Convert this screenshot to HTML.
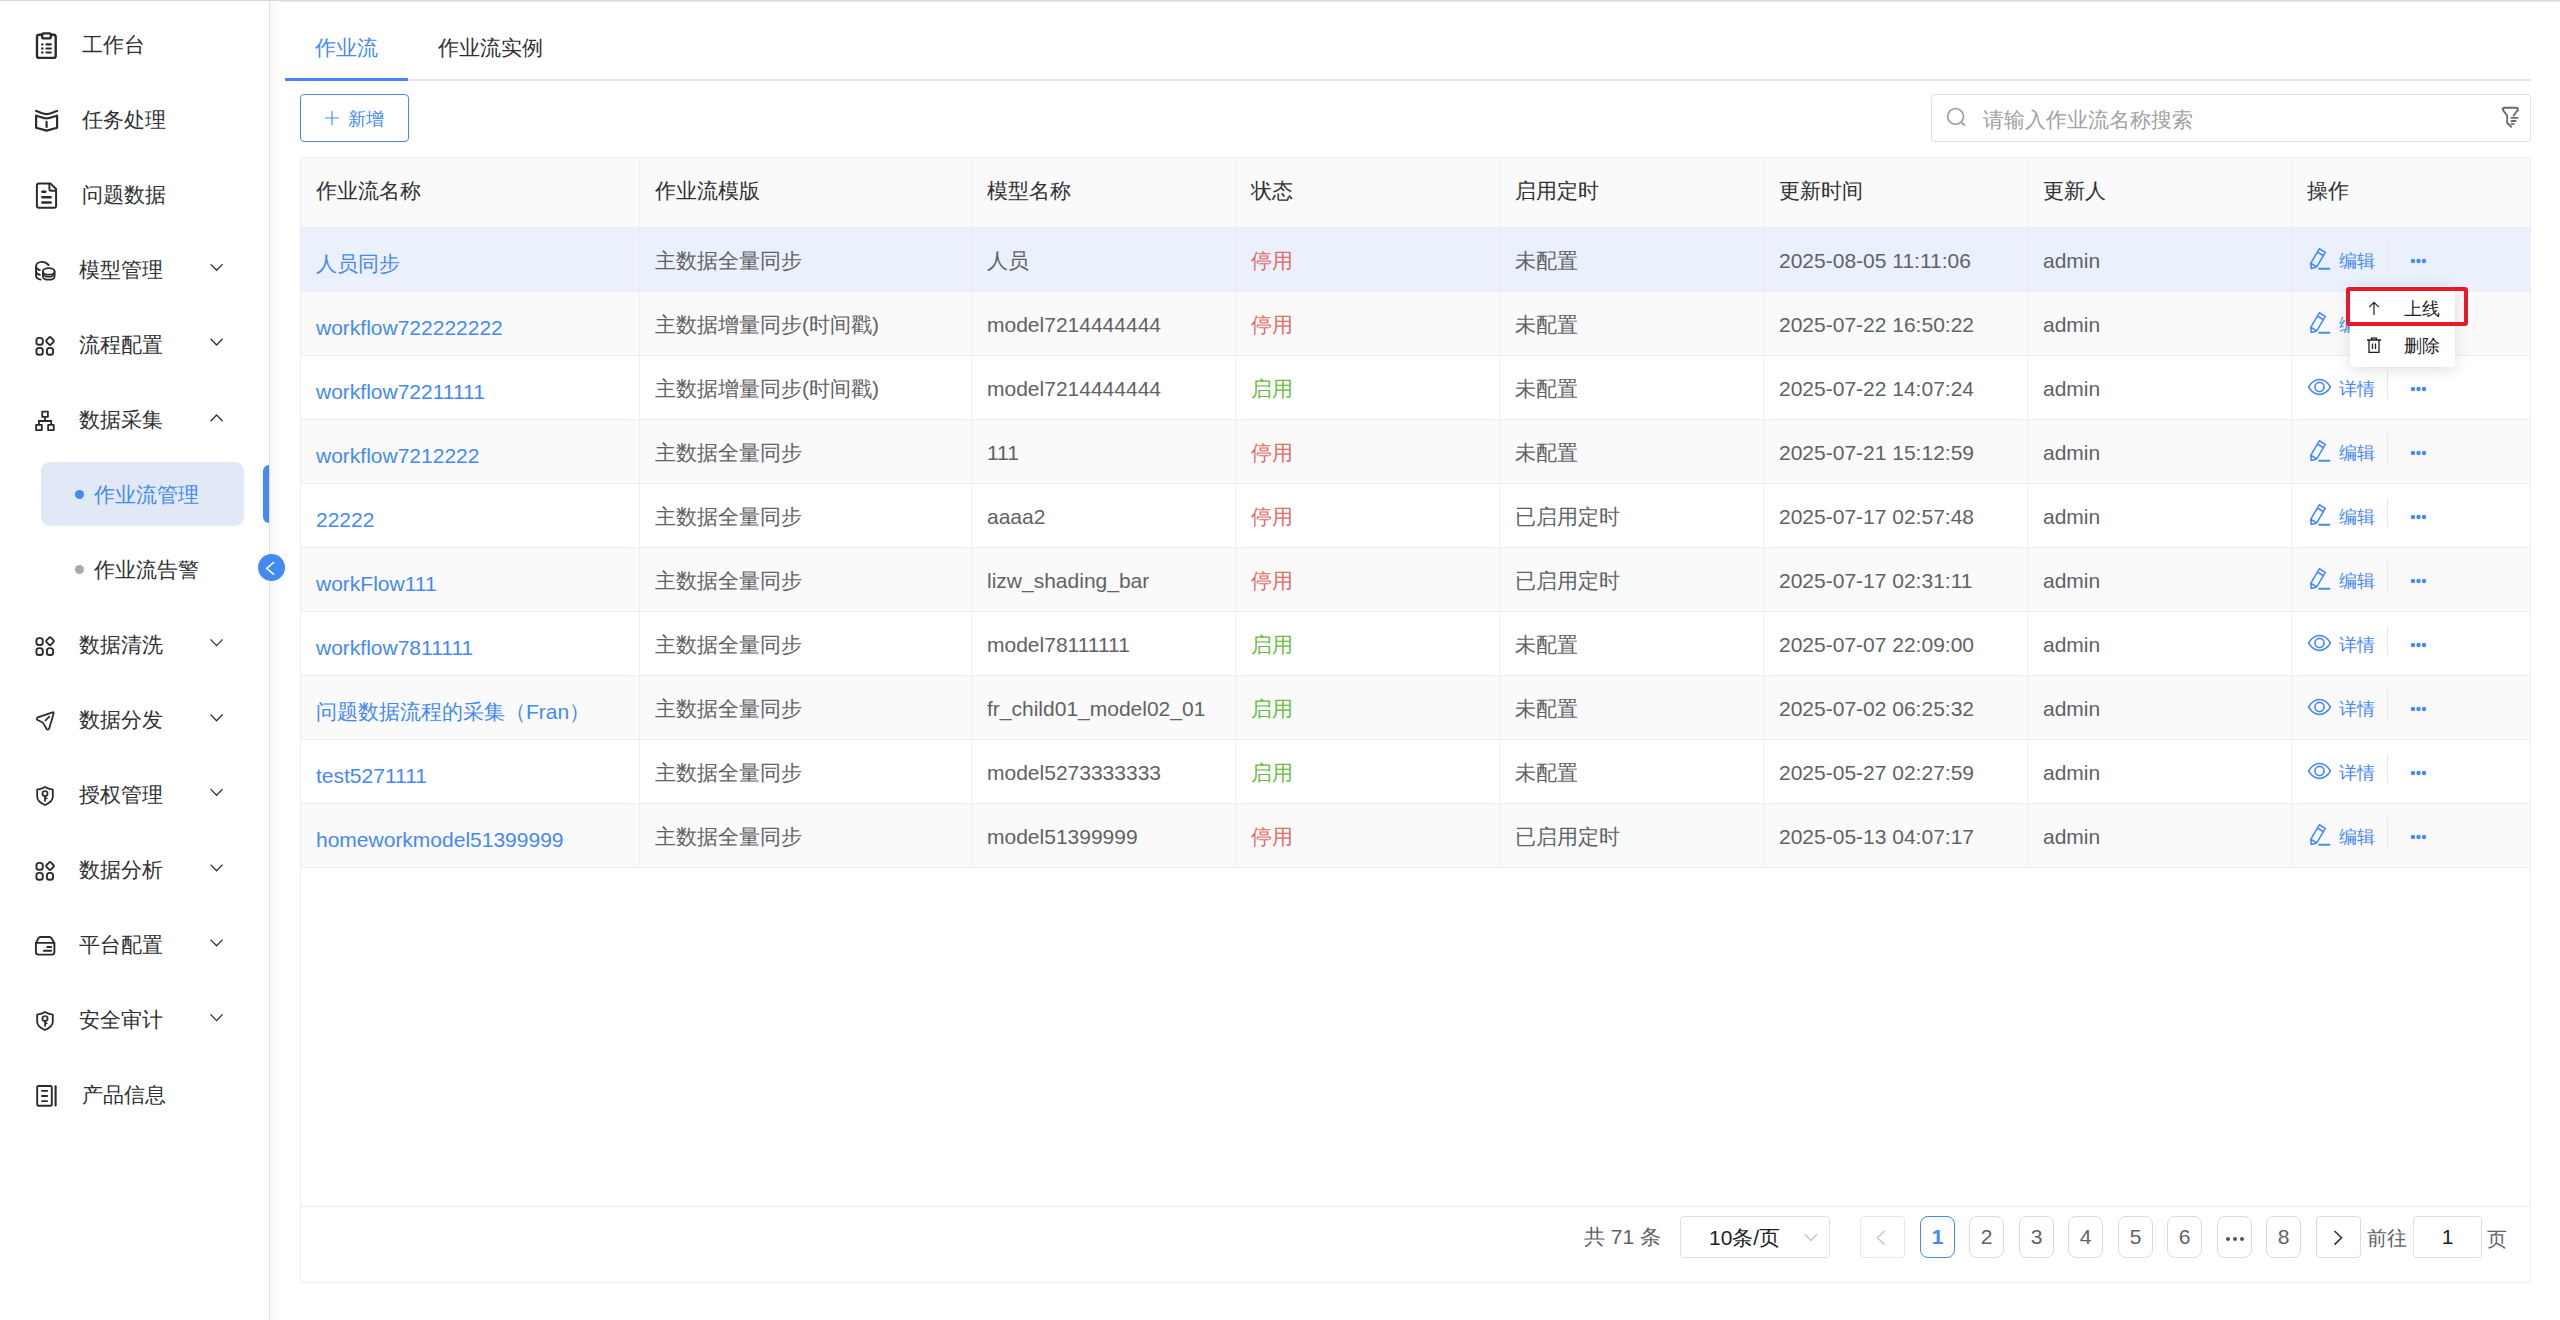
<!DOCTYPE html>
<html><head><meta charset="utf-8">
<style>
*{box-sizing:border-box;margin:0;padding:0}
html,body{width:2560px;height:1320px;overflow:hidden;background:#fff;font-family:"Liberation Sans",sans-serif;color:#303133}
.a{position:absolute;white-space:nowrap}
.mi{position:absolute;font-size:21px;line-height:40px;height:40px;color:#303133;white-space:nowrap}
.th{position:absolute;font-size:21px;color:#303133;white-space:nowrap;line-height:30px}
.td{position:absolute;font-size:21px;color:#606266;white-space:nowrap;line-height:30px}
.vl{position:absolute;width:1px;background:#ebeef5}
.hl{position:absolute;height:1px;background:#ebeef5}
.pg{position:absolute;top:1216px;height:42px;width:35px;border:1px solid #dcdcdc;border-radius:8px;font-size:21px;line-height:40px;text-align:center;color:#606266;background:#fff}
</style></head>
<body>

<div class="a" style="left:0;top:0;width:2560px;height:1px;background:#d8d8d8"></div>
<div class="a" style="left:270px;top:1px;width:2290px;height:2px;background:linear-gradient(180deg,#e9ebf2,#ffffff)"></div>
<div class="a" style="left:269px;top:1px;width:1px;height:1319px;background:#e0e0e0"></div>
<div class="a" style="left:270px;top:1px;width:11px;height:1319px;background:linear-gradient(90deg,#f6f6f6,#ffffff)"></div>
<svg class="a" style="left:0;top:0" width="269" height="1320" viewBox="0 0 269 1320"><rect x="37" y="34.7" width="18.7" height="23.2" rx="2.2" fill="none" stroke="#2b2b2b" stroke-linecap="round" stroke-linejoin="round" stroke-width="2.4"/><rect x="42.1" y="33.4" width="8.8" height="5" rx="1.6" fill="#fff" stroke="#2b2b2b" stroke-width="2.4"/><circle cx="42.3" cy="44.4" r="1.2" fill="#2b2b2b"/><rect x="45.3" y="43.3" width="6.6" height="2.2" rx="1.1" fill="#2b2b2b"/><circle cx="42.3" cy="48.5" r="1.2" fill="#2b2b2b"/><rect x="45.3" y="47.4" width="6.6" height="2.2" rx="1.1" fill="#2b2b2b"/><circle cx="42.3" cy="52.5" r="1.2" fill="#2b2b2b"/><rect x="45.3" y="51.4" width="6.6" height="2.2" rx="1.1" fill="#2b2b2b"/><path d="M36.1 111 C40.5 112.4 43.5 114.2 46.6 114.2 C49.7 114.2 52.7 112.4 57.1 111" fill="none" stroke="#2b2b2b" stroke-linecap="round" stroke-linejoin="round" stroke-width="2.2"/><path d="M36.1 115.6 C40.5 117 43.5 118.3 46.6 118.3 C49.7 118.3 52.7 117 57.1 115.6 V127.8 L46.6 130.6 L36.1 127.8 Z" fill="none" stroke="#2b2b2b" stroke-linecap="round" stroke-linejoin="round" stroke-width="2.2"/><path d="M46.6 121.8 V127" fill="none" stroke="#2b2b2b" stroke-linecap="round" stroke-linejoin="round" stroke-width="2.2"/><path d="M38.9 183.6 H50.7 L56.1 189 V205.7 Q56.1 207.7 54.1 207.7 H38.9 Q36.9 207.7 36.9 205.7 V185.6 Q36.9 183.6 38.9 183.6 Z" fill="none" stroke="#2b2b2b" stroke-linecap="round" stroke-linejoin="round" stroke-width="2"/><path d="M49.4 184 V189 Q49.4 190.7 51.1 190.7 H55.8" fill="none" stroke="#2b2b2b" stroke-linecap="round" stroke-linejoin="round" stroke-width="2"/><path d="M42.3 191.7 H45.4 M42.3 197.2 H50.7 M42.3 202.5 H50.7" fill="none" stroke="#2b2b2b" stroke-linecap="round" stroke-linejoin="round" stroke-width="2.4"/><path d="M48.6 265 C46.5 262.6 44.3 261.9 42 261.9 C38.5 261.9 36 263.9 36 266.5 V275.5 C36 277.5 38 279 40.7 279.6" fill="none" stroke="#2b2b2b" stroke-linecap="round" stroke-linejoin="round" stroke-width="1.9"/><path d="M36 267 C36.5 268.8 38 269.6 39.8 270 M36 271.8 C36.5 273.6 38 274.4 39.8 274.8" fill="none" stroke="#2b2b2b" stroke-linecap="round" stroke-linejoin="round" stroke-width="1.9"/><ellipse cx="48.75" cy="271.4" rx="5.85" ry="3.3" fill="none" stroke="#2b2b2b" stroke-linecap="round" stroke-linejoin="round" stroke-width="1.7"/><path d="M42.9 271.4 V276.4 C42.9 278.4 45.5 279.7 48.75 279.7 C52 279.7 54.6 278.4 54.6 276.4 V271.4" fill="none" stroke="#2b2b2b" stroke-linecap="round" stroke-linejoin="round" stroke-width="1.7"/><path d="M42.9 273 C43.4 275.6 45.8 276.8 48.75 276.8 C51.7 276.8 54.1 275.6 54.6 273" fill="none" stroke="#2b2b2b" stroke-linecap="round" stroke-linejoin="round" stroke-width="1.5"/><rect x="36.4" y="337.9" width="6.4" height="6.9" rx="2.6" fill="none" stroke="#2b2b2b" stroke-linecap="round" stroke-linejoin="round" stroke-width="1.9"/><path d="M49 337.6 Q50 336.6 51 337.6 L53.4 340.0 Q54.4 341.0 53.4 342.0 L51 344.4 Q50 345.4 49 344.4 L46.6 342.0 Q45.6 341.0 46.6 340.0 Z" fill="none" stroke="#2b2b2b" stroke-linecap="round" stroke-linejoin="round" stroke-width="1.9"/><rect x="36.4" y="347.9" width="6.4" height="6.9" rx="2.6" fill="none" stroke="#2b2b2b" stroke-linecap="round" stroke-linejoin="round" stroke-width="1.9"/><rect x="46.9" y="347.9" width="6.2" height="6.9" rx="2.6" fill="none" stroke="#2b2b2b" stroke-linecap="round" stroke-linejoin="round" stroke-width="1.9"/><rect x="42.2" y="411.6" width="5.7" height="5.2" fill="none" stroke="#2b2b2b" stroke-linecap="round" stroke-linejoin="round" stroke-width="1.8" stroke-linecap="butt" stroke-linejoin="miter"/><path d="M45 417 V421 M38.9 424.5 V421 H51.2 V424.5" fill="none" stroke="#2b2b2b" stroke-width="1.8"/><rect x="36.1" y="424.9" width="5.7" height="5.2" fill="none" stroke="#2b2b2b" stroke-linecap="round" stroke-linejoin="round" stroke-width="1.8" stroke-linecap="butt" stroke-linejoin="miter"/><rect x="48.1" y="424.9" width="5.7" height="5.2" fill="none" stroke="#2b2b2b" stroke-linecap="round" stroke-linejoin="round" stroke-width="1.8" stroke-linecap="butt" stroke-linejoin="miter"/><rect x="36.4" y="638.1" width="6.4" height="6.9" rx="2.6" fill="none" stroke="#2b2b2b" stroke-linecap="round" stroke-linejoin="round" stroke-width="1.9"/><path d="M49 637.8000000000001 Q50 636.8000000000001 51 637.8000000000001 L53.4 640.2 Q54.4 641.2 53.4 642.2 L51 644.6 Q50 645.6 49 644.6 L46.6 642.2 Q45.6 641.2 46.6 640.2 Z" fill="none" stroke="#2b2b2b" stroke-linecap="round" stroke-linejoin="round" stroke-width="1.9"/><rect x="36.4" y="648.1" width="6.4" height="6.9" rx="2.6" fill="none" stroke="#2b2b2b" stroke-linecap="round" stroke-linejoin="round" stroke-width="1.9"/><rect x="46.9" y="648.1" width="6.2" height="6.9" rx="2.6" fill="none" stroke="#2b2b2b" stroke-linecap="round" stroke-linejoin="round" stroke-width="1.9"/><path d="M52.6 712.3 L37.6 717.4 Q35.9 718.6 37.6 720 L41.8 722 Q43.3 722.8 44 724.3 L46.6 729 Q48 730.4 49.2 728.6 L53.5 714 Q54 711.9 52.6 712.3 Z" fill="none" stroke="#2b2b2b" stroke-linecap="round" stroke-linejoin="round" stroke-width="1.75"/><path d="M49.3 716.6 L45.4 720.5" fill="none" stroke="#2b2b2b" stroke-linecap="round" stroke-linejoin="round" stroke-width="1.75"/><path d="M45 787.0 Q42 789.0 37.2 789.6 V797.0 Q37.2 801.5 45 805.0 Q52.8 801.5 52.8 797.0 V789.6 Q48 789.0 45 787.0 Z" fill="none" stroke="#2b2b2b" stroke-linecap="round" stroke-linejoin="round" stroke-width="1.8"/><circle cx="45" cy="793.6" r="2.6" fill="none" stroke="#2b2b2b" stroke-linecap="round" stroke-linejoin="round" stroke-width="1.7"/><path d="M45 796.3 V801.0 M45 799.0 L46.8 798.3" fill="none" stroke="#2b2b2b" stroke-linecap="round" stroke-linejoin="round" stroke-width="1.7"/><rect x="36.4" y="862.9" width="6.4" height="6.9" rx="2.6" fill="none" stroke="#2b2b2b" stroke-linecap="round" stroke-linejoin="round" stroke-width="1.9"/><path d="M49 862.6 Q50 861.6 51 862.6 L53.4 865.0 Q54.4 866.0 53.4 867.0 L51 869.4 Q50 870.4 49 869.4 L46.6 867.0 Q45.6 866.0 46.6 865.0 Z" fill="none" stroke="#2b2b2b" stroke-linecap="round" stroke-linejoin="round" stroke-width="1.9"/><rect x="36.4" y="872.9" width="6.4" height="6.9" rx="2.6" fill="none" stroke="#2b2b2b" stroke-linecap="round" stroke-linejoin="round" stroke-width="1.9"/><rect x="46.9" y="872.9" width="6.2" height="6.9" rx="2.6" fill="none" stroke="#2b2b2b" stroke-linecap="round" stroke-linejoin="round" stroke-width="1.9"/><path d="M36 942.9 L38.4 938.3 Q39 937 40.5 937 H49.4 Q50.9 937 51.5 938.3 L54.3 942.9" fill="none" stroke="#2b2b2b" stroke-linecap="round" stroke-linejoin="round" stroke-width="1.9"/><path d="M35.9 942.9 H54.4 V952 Q54.4 954.6 51.8 954.6 H38.5 Q35.9 954.6 35.9 952 Z" fill="none" stroke="#2b2b2b" stroke-linecap="round" stroke-linejoin="round" stroke-width="1.9"/><path d="M47.3 947 H51.2 M43.8 950.8 H51.2" fill="none" stroke="#2b2b2b" stroke-linecap="round" stroke-linejoin="round" stroke-width="1.9"/><path d="M45 1012.0 Q42 1014.0 37.2 1014.6 V1022.0 Q37.2 1026.5 45 1030.0 Q52.8 1026.5 52.8 1022.0 V1014.6 Q48 1014.0 45 1012.0 Z" fill="none" stroke="#2b2b2b" stroke-linecap="round" stroke-linejoin="round" stroke-width="1.8"/><circle cx="45" cy="1018.6" r="2.6" fill="none" stroke="#2b2b2b" stroke-linecap="round" stroke-linejoin="round" stroke-width="1.7"/><path d="M45 1021.3 V1026.0 M45 1024.0 L46.8 1023.3" fill="none" stroke="#2b2b2b" stroke-linecap="round" stroke-linejoin="round" stroke-width="1.7"/><rect x="37.2" y="1086" width="14.6" height="19.7" rx="1.3" fill="none" stroke="#2b2b2b" stroke-linecap="round" stroke-linejoin="round" stroke-width="1.9"/><path d="M42 1090.9 H47.3 M42 1096 H47.3 M42 1101.1 H47.3" fill="none" stroke="#2b2b2b" stroke-linecap="round" stroke-linejoin="round" stroke-width="1.9"/><path d="M55.6 1086.2 V1104 L55.6 1105.5" fill="none" stroke="#2b2b2b" stroke-linecap="round" stroke-linejoin="round" stroke-width="2.1"/><path d="M210.6 264.1 L216.6 270.3 L222.6 264.1" fill="none" stroke="#333" stroke-width="1.3"/><path d="M210.6 338.8 L216.6 345.0 L222.6 338.8" fill="none" stroke="#333" stroke-width="1.3"/><path d="M210.6 421.2 L216.6 415.0 L222.6 421.2" fill="none" stroke="#333" stroke-width="1.3"/><path d="M210.6 639.3999999999999 L216.6 645.5999999999999 L222.6 639.3999999999999" fill="none" stroke="#333" stroke-width="1.3"/><path d="M210.6 714.4999999999999 L216.6 720.6999999999999 L222.6 714.4999999999999" fill="none" stroke="#333" stroke-width="1.3"/><path d="M210.6 789.0999999999999 L216.6 795.3 L222.6 789.0999999999999" fill="none" stroke="#333" stroke-width="1.3"/><path d="M210.6 864.5999999999999 L216.6 870.8 L222.6 864.5999999999999" fill="none" stroke="#333" stroke-width="1.3"/><path d="M210.6 939.5999999999999 L216.6 945.8 L222.6 939.5999999999999" fill="none" stroke="#333" stroke-width="1.3"/><path d="M210.6 1014.3999999999999 L216.6 1020.5999999999999 L222.6 1014.3999999999999" fill="none" stroke="#333" stroke-width="1.3"/></svg>
<div class="mi" style="left:82px;top:24.5px">工作台</div>
<div class="mi" style="left:82px;top:99.5px">任务处理</div>
<div class="mi" style="left:82px;top:174.5px">问题数据</div>
<div class="mi" style="left:79px;top:249.5px">模型管理</div>
<div class="mi" style="left:79px;top:324.5px">流程配置</div>
<div class="mi" style="left:79px;top:399.5px">数据采集</div>
<div class="mi" style="left:79px;top:624.5px">数据清洗</div>
<div class="mi" style="left:79px;top:699.5px">数据分发</div>
<div class="mi" style="left:79px;top:774.5px">授权管理</div>
<div class="mi" style="left:79px;top:849.5px">数据分析</div>
<div class="mi" style="left:79px;top:924.5px">平台配置</div>
<div class="mi" style="left:79px;top:999.5px">安全审计</div>
<div class="mi" style="left:82px;top:1074.5px">产品信息</div>
<div class="a" style="left:41px;top:462px;width:203px;height:64px;background:#e0e9f5;border-radius:9px"></div>
<div class="a" style="left:75px;top:490px;width:9px;height:9px;border-radius:50%;background:#4589f5"></div>
<div class="mi" style="left:94px;top:474.5px;color:#4589f5">作业流管理</div>
<div class="a" style="left:75px;top:565px;width:9px;height:9px;border-radius:50%;background:#aaaaaa"></div>
<div class="mi" style="left:94px;top:549.5px">作业流告警</div>
<div class="a" style="left:263px;top:465px;width:6px;height:58px;background:#4589f5;border-radius:6px 0 0 6px"></div>
<svg class="a" style="left:258px;top:554px" width="27" height="27" viewBox="0 0 27 27"><circle cx="13.5" cy="13.5" r="13.5" fill="#4589f5"/><path d="M16.1 8 L8.7 14.3 L16.1 20.7" fill="none" stroke="#fff" stroke-width="1.6"/></svg>
<div class="a" style="left:285px;top:79px;width:2246px;height:2px;background:#e4e7ed"></div>
<div class="a" style="left:285px;top:78px;width:123px;height:3px;background:#4589f5"></div>
<div class="a" style="left:315px;top:33px;font-size:21px;line-height:30px;color:#4589f5">作业流</div>
<div class="a" style="left:438px;top:33px;font-size:21px;line-height:30px;color:#303133">作业流实例</div>
<div class="a" style="left:300px;top:94px;width:109px;height:48px;border:1px solid #4589f5;border-radius:4px"></div>
<svg class="a" style="left:324px;top:110px" width="16" height="16" viewBox="0 0 16 16"><path d="M1 8 H15 M8 1 V15" stroke="#4589f5" stroke-width="1.15"/></svg>
<div class="a" style="left:348px;top:104px;font-size:18px;line-height:30px;color:#4589f5">新增</div>
<div class="a" style="left:1931px;top:94px;width:600px;height:48px;border:1px solid #dcdfe6;border-radius:4px;background:#fff"></div>
<svg class="a" style="left:1945px;top:106px" width="22" height="22" viewBox="0 0 22 22"><circle cx="10.6" cy="10.4" r="7.9" fill="none" stroke="#9a9a9a" stroke-width="1.6"/><path d="M16.3 16.3 L19.6 19.2" stroke="#9a9a9a" stroke-width="1.6" stroke-linecap="round"/></svg>
<div class="a" style="left:1983px;top:105px;font-size:21px;line-height:30px;color:#a2a2a2">请输入作业流名称搜索</div>
<svg class="a" style="left:2494px;top:100px" width="32" height="32" viewBox="0 0 32 32"><path d="M17.2 26.7 L13.2 23 V15.8 L8.9 9.9 Q7.9 7.8 10.9 7.8 H21.8 Q24.8 7.8 23.8 9.9 L19.6 15.5" fill="none" stroke="#6a6a6a" stroke-width="1.9" stroke-linecap="round" stroke-linejoin="round"/><path d="M17.5 17.9 H23.5 M17.5 21 H21.6 M17.5 23.9 H19.8" stroke="#6a6a6a" stroke-width="1.9" stroke-linecap="round"/></svg>
<div class="a" style="left:300px;top:157px;width:2231px;height:1126px;border:1px solid #ebeef5"></div>
<div class="a" style="left:301px;top:158px;width:2229px;height:69px;background:#fafafa"></div>
<div class="th" style="left:316px;top:176px">作业流名称</div>
<div class="th" style="left:655px;top:176px">作业流模版</div>
<div class="th" style="left:987px;top:176px">模型名称</div>
<div class="th" style="left:1251px;top:176px">状态</div>
<div class="th" style="left:1515px;top:176px">启用定时</div>
<div class="th" style="left:1779px;top:176px">更新时间</div>
<div class="th" style="left:2043px;top:176px">更新人</div>
<div class="th" style="left:2307px;top:176px">操作</div>
<div class="a" style="left:301px;top:227px;width:2229px;height:64px;background:#ebf0fd"></div>
<div class="hl" style="left:301px;top:227px;width:2229px"></div>
<div class="td" style="left:316px;top:249px;color:#4589f5">人员同步</div>
<div class="td" style="left:655px;top:246px">主数据全量同步</div>
<div class="td" style="left:987px;top:246px">人员</div>
<div class="td" style="left:1251px;top:246px;color:#e26a66">停用</div>
<div class="td" style="left:1515px;top:246px">未配置</div>
<div class="td" style="left:1779px;top:246px">2025-08-05 11:11:06</div>
<div class="td" style="left:2043px;top:246px">admin</div>
<div class="a" style="left:2304px;top:242px;line-height:0"><svg width="32" height="32" viewBox="0 0 32 32"><path d="M15.3 6.8 L21.3 10.4 L12.7 24.9 L7.3 26.4 L6.7 21.3 Z M13.6 10.2 L19.6 13.8 M6.7 21.3 L12.7 24.9" fill="none" stroke="#4589f5" stroke-width="1.6" stroke-linejoin="round"/><path d="M15.2 26.8 H25.3" stroke="#4589f5" stroke-width="2" stroke-linecap="round"/></svg></div>
<div class="a" style="left:2339px;top:246px;font-size:18px;line-height:30px;color:#4589f5">编辑</div>
<div class="a" style="left:2387px;top:242px;width:1px;height:29px;background:#e4e7ed"></div>
<svg class="a" style="left:2408px;top:258px" width="20" height="6" viewBox="0 0 20 6"><circle cx="5" cy="3" r="2.2" fill="#4589f5"/><circle cx="10.5" cy="3" r="2.2" fill="#4589f5"/><circle cx="16" cy="3" r="2.2" fill="#4589f5"/></svg>
<div class="a" style="left:301px;top:291px;width:2229px;height:64px;background:#fafafa"></div>
<div class="hl" style="left:301px;top:291px;width:2229px"></div>
<div class="td" style="left:316px;top:313px;color:#4589f5">workflow722222222</div>
<div class="td" style="left:655px;top:310px">主数据增量同步(时间戳)</div>
<div class="td" style="left:987px;top:310px">model7214444444</div>
<div class="td" style="left:1251px;top:310px;color:#e26a66">停用</div>
<div class="td" style="left:1515px;top:310px">未配置</div>
<div class="td" style="left:1779px;top:310px">2025-07-22 16:50:22</div>
<div class="td" style="left:2043px;top:310px">admin</div>
<div class="a" style="left:2304px;top:306px;line-height:0"><svg width="32" height="32" viewBox="0 0 32 32"><path d="M15.3 6.8 L21.3 10.4 L12.7 24.9 L7.3 26.4 L6.7 21.3 Z M13.6 10.2 L19.6 13.8 M6.7 21.3 L12.7 24.9" fill="none" stroke="#4589f5" stroke-width="1.6" stroke-linejoin="round"/><path d="M15.2 26.8 H25.3" stroke="#4589f5" stroke-width="2" stroke-linecap="round"/></svg></div>
<div class="a" style="left:2339px;top:310px;font-size:18px;line-height:30px;color:#4589f5">编辑</div>
<div class="a" style="left:2387px;top:306px;width:1px;height:29px;background:#e4e7ed"></div>
<svg class="a" style="left:2408px;top:322px" width="20" height="6" viewBox="0 0 20 6"><circle cx="5" cy="3" r="2.2" fill="#4589f5"/><circle cx="10.5" cy="3" r="2.2" fill="#4589f5"/><circle cx="16" cy="3" r="2.2" fill="#4589f5"/></svg>
<div class="a" style="left:301px;top:355px;width:2229px;height:64px;background:#ffffff"></div>
<div class="hl" style="left:301px;top:355px;width:2229px"></div>
<div class="td" style="left:316px;top:377px;color:#4589f5">workflow72211111</div>
<div class="td" style="left:655px;top:374px">主数据增量同步(时间戳)</div>
<div class="td" style="left:987px;top:374px">model7214444444</div>
<div class="td" style="left:1251px;top:374px;color:#67bd45">启用</div>
<div class="td" style="left:1515px;top:374px">未配置</div>
<div class="td" style="left:1779px;top:374px">2025-07-22 14:07:24</div>
<div class="td" style="left:2043px;top:374px">admin</div>
<div class="a" style="left:2307px;top:378px;line-height:0"><svg width="26" height="20" viewBox="0 0 26 20"><path d="M1.5 9 C4.8 3.8 8.6 1.6 12.5 1.6 C16.4 1.6 20.2 3.8 23.5 9 C20.2 14.2 16.4 16.4 12.5 16.4 C8.6 16.4 4.8 14.2 1.5 9 Z" fill="none" stroke="#4589f5" stroke-width="1.5" stroke-linejoin="round"/><circle cx="12.5" cy="9" r="4.6" fill="none" stroke="#4589f5" stroke-width="1.6"/></svg></div>
<div class="a" style="left:2339px;top:374px;font-size:18px;line-height:30px;color:#4589f5">详情</div>
<div class="a" style="left:2387px;top:370px;width:1px;height:29px;background:#e4e7ed"></div>
<svg class="a" style="left:2408px;top:386px" width="20" height="6" viewBox="0 0 20 6"><circle cx="5" cy="3" r="2.2" fill="#4589f5"/><circle cx="10.5" cy="3" r="2.2" fill="#4589f5"/><circle cx="16" cy="3" r="2.2" fill="#4589f5"/></svg>
<div class="a" style="left:301px;top:419px;width:2229px;height:64px;background:#fafafa"></div>
<div class="hl" style="left:301px;top:419px;width:2229px"></div>
<div class="td" style="left:316px;top:441px;color:#4589f5">workflow7212222</div>
<div class="td" style="left:655px;top:438px">主数据全量同步</div>
<div class="td" style="left:987px;top:438px">111</div>
<div class="td" style="left:1251px;top:438px;color:#e26a66">停用</div>
<div class="td" style="left:1515px;top:438px">未配置</div>
<div class="td" style="left:1779px;top:438px">2025-07-21 15:12:59</div>
<div class="td" style="left:2043px;top:438px">admin</div>
<div class="a" style="left:2304px;top:434px;line-height:0"><svg width="32" height="32" viewBox="0 0 32 32"><path d="M15.3 6.8 L21.3 10.4 L12.7 24.9 L7.3 26.4 L6.7 21.3 Z M13.6 10.2 L19.6 13.8 M6.7 21.3 L12.7 24.9" fill="none" stroke="#4589f5" stroke-width="1.6" stroke-linejoin="round"/><path d="M15.2 26.8 H25.3" stroke="#4589f5" stroke-width="2" stroke-linecap="round"/></svg></div>
<div class="a" style="left:2339px;top:438px;font-size:18px;line-height:30px;color:#4589f5">编辑</div>
<div class="a" style="left:2387px;top:434px;width:1px;height:29px;background:#e4e7ed"></div>
<svg class="a" style="left:2408px;top:450px" width="20" height="6" viewBox="0 0 20 6"><circle cx="5" cy="3" r="2.2" fill="#4589f5"/><circle cx="10.5" cy="3" r="2.2" fill="#4589f5"/><circle cx="16" cy="3" r="2.2" fill="#4589f5"/></svg>
<div class="a" style="left:301px;top:483px;width:2229px;height:64px;background:#ffffff"></div>
<div class="hl" style="left:301px;top:483px;width:2229px"></div>
<div class="td" style="left:316px;top:505px;color:#4589f5">22222</div>
<div class="td" style="left:655px;top:502px">主数据全量同步</div>
<div class="td" style="left:987px;top:502px">aaaa2</div>
<div class="td" style="left:1251px;top:502px;color:#e26a66">停用</div>
<div class="td" style="left:1515px;top:502px">已启用定时</div>
<div class="td" style="left:1779px;top:502px">2025-07-17 02:57:48</div>
<div class="td" style="left:2043px;top:502px">admin</div>
<div class="a" style="left:2304px;top:498px;line-height:0"><svg width="32" height="32" viewBox="0 0 32 32"><path d="M15.3 6.8 L21.3 10.4 L12.7 24.9 L7.3 26.4 L6.7 21.3 Z M13.6 10.2 L19.6 13.8 M6.7 21.3 L12.7 24.9" fill="none" stroke="#4589f5" stroke-width="1.6" stroke-linejoin="round"/><path d="M15.2 26.8 H25.3" stroke="#4589f5" stroke-width="2" stroke-linecap="round"/></svg></div>
<div class="a" style="left:2339px;top:502px;font-size:18px;line-height:30px;color:#4589f5">编辑</div>
<div class="a" style="left:2387px;top:498px;width:1px;height:29px;background:#e4e7ed"></div>
<svg class="a" style="left:2408px;top:514px" width="20" height="6" viewBox="0 0 20 6"><circle cx="5" cy="3" r="2.2" fill="#4589f5"/><circle cx="10.5" cy="3" r="2.2" fill="#4589f5"/><circle cx="16" cy="3" r="2.2" fill="#4589f5"/></svg>
<div class="a" style="left:301px;top:547px;width:2229px;height:64px;background:#fafafa"></div>
<div class="hl" style="left:301px;top:547px;width:2229px"></div>
<div class="td" style="left:316px;top:569px;color:#4589f5">workFlow111</div>
<div class="td" style="left:655px;top:566px">主数据全量同步</div>
<div class="td" style="left:987px;top:566px">lizw_shading_bar</div>
<div class="td" style="left:1251px;top:566px;color:#e26a66">停用</div>
<div class="td" style="left:1515px;top:566px">已启用定时</div>
<div class="td" style="left:1779px;top:566px">2025-07-17 02:31:11</div>
<div class="td" style="left:2043px;top:566px">admin</div>
<div class="a" style="left:2304px;top:562px;line-height:0"><svg width="32" height="32" viewBox="0 0 32 32"><path d="M15.3 6.8 L21.3 10.4 L12.7 24.9 L7.3 26.4 L6.7 21.3 Z M13.6 10.2 L19.6 13.8 M6.7 21.3 L12.7 24.9" fill="none" stroke="#4589f5" stroke-width="1.6" stroke-linejoin="round"/><path d="M15.2 26.8 H25.3" stroke="#4589f5" stroke-width="2" stroke-linecap="round"/></svg></div>
<div class="a" style="left:2339px;top:566px;font-size:18px;line-height:30px;color:#4589f5">编辑</div>
<div class="a" style="left:2387px;top:562px;width:1px;height:29px;background:#e4e7ed"></div>
<svg class="a" style="left:2408px;top:578px" width="20" height="6" viewBox="0 0 20 6"><circle cx="5" cy="3" r="2.2" fill="#4589f5"/><circle cx="10.5" cy="3" r="2.2" fill="#4589f5"/><circle cx="16" cy="3" r="2.2" fill="#4589f5"/></svg>
<div class="a" style="left:301px;top:611px;width:2229px;height:64px;background:#ffffff"></div>
<div class="hl" style="left:301px;top:611px;width:2229px"></div>
<div class="td" style="left:316px;top:633px;color:#4589f5">workflow7811111</div>
<div class="td" style="left:655px;top:630px">主数据全量同步</div>
<div class="td" style="left:987px;top:630px">model78111111</div>
<div class="td" style="left:1251px;top:630px;color:#67bd45">启用</div>
<div class="td" style="left:1515px;top:630px">未配置</div>
<div class="td" style="left:1779px;top:630px">2025-07-07 22:09:00</div>
<div class="td" style="left:2043px;top:630px">admin</div>
<div class="a" style="left:2307px;top:634px;line-height:0"><svg width="26" height="20" viewBox="0 0 26 20"><path d="M1.5 9 C4.8 3.8 8.6 1.6 12.5 1.6 C16.4 1.6 20.2 3.8 23.5 9 C20.2 14.2 16.4 16.4 12.5 16.4 C8.6 16.4 4.8 14.2 1.5 9 Z" fill="none" stroke="#4589f5" stroke-width="1.5" stroke-linejoin="round"/><circle cx="12.5" cy="9" r="4.6" fill="none" stroke="#4589f5" stroke-width="1.6"/></svg></div>
<div class="a" style="left:2339px;top:630px;font-size:18px;line-height:30px;color:#4589f5">详情</div>
<div class="a" style="left:2387px;top:626px;width:1px;height:29px;background:#e4e7ed"></div>
<svg class="a" style="left:2408px;top:642px" width="20" height="6" viewBox="0 0 20 6"><circle cx="5" cy="3" r="2.2" fill="#4589f5"/><circle cx="10.5" cy="3" r="2.2" fill="#4589f5"/><circle cx="16" cy="3" r="2.2" fill="#4589f5"/></svg>
<div class="a" style="left:301px;top:675px;width:2229px;height:64px;background:#fafafa"></div>
<div class="hl" style="left:301px;top:675px;width:2229px"></div>
<div class="td" style="left:316px;top:697px;color:#4589f5">问题数据流程的采集（Fran）</div>
<div class="td" style="left:655px;top:694px">主数据全量同步</div>
<div class="td" style="left:987px;top:694px">fr_child01_model02_01</div>
<div class="td" style="left:1251px;top:694px;color:#67bd45">启用</div>
<div class="td" style="left:1515px;top:694px">未配置</div>
<div class="td" style="left:1779px;top:694px">2025-07-02 06:25:32</div>
<div class="td" style="left:2043px;top:694px">admin</div>
<div class="a" style="left:2307px;top:698px;line-height:0"><svg width="26" height="20" viewBox="0 0 26 20"><path d="M1.5 9 C4.8 3.8 8.6 1.6 12.5 1.6 C16.4 1.6 20.2 3.8 23.5 9 C20.2 14.2 16.4 16.4 12.5 16.4 C8.6 16.4 4.8 14.2 1.5 9 Z" fill="none" stroke="#4589f5" stroke-width="1.5" stroke-linejoin="round"/><circle cx="12.5" cy="9" r="4.6" fill="none" stroke="#4589f5" stroke-width="1.6"/></svg></div>
<div class="a" style="left:2339px;top:694px;font-size:18px;line-height:30px;color:#4589f5">详情</div>
<div class="a" style="left:2387px;top:690px;width:1px;height:29px;background:#e4e7ed"></div>
<svg class="a" style="left:2408px;top:706px" width="20" height="6" viewBox="0 0 20 6"><circle cx="5" cy="3" r="2.2" fill="#4589f5"/><circle cx="10.5" cy="3" r="2.2" fill="#4589f5"/><circle cx="16" cy="3" r="2.2" fill="#4589f5"/></svg>
<div class="a" style="left:301px;top:739px;width:2229px;height:64px;background:#ffffff"></div>
<div class="hl" style="left:301px;top:739px;width:2229px"></div>
<div class="td" style="left:316px;top:761px;color:#4589f5">test5271111</div>
<div class="td" style="left:655px;top:758px">主数据全量同步</div>
<div class="td" style="left:987px;top:758px">model5273333333</div>
<div class="td" style="left:1251px;top:758px;color:#67bd45">启用</div>
<div class="td" style="left:1515px;top:758px">未配置</div>
<div class="td" style="left:1779px;top:758px">2025-05-27 02:27:59</div>
<div class="td" style="left:2043px;top:758px">admin</div>
<div class="a" style="left:2307px;top:762px;line-height:0"><svg width="26" height="20" viewBox="0 0 26 20"><path d="M1.5 9 C4.8 3.8 8.6 1.6 12.5 1.6 C16.4 1.6 20.2 3.8 23.5 9 C20.2 14.2 16.4 16.4 12.5 16.4 C8.6 16.4 4.8 14.2 1.5 9 Z" fill="none" stroke="#4589f5" stroke-width="1.5" stroke-linejoin="round"/><circle cx="12.5" cy="9" r="4.6" fill="none" stroke="#4589f5" stroke-width="1.6"/></svg></div>
<div class="a" style="left:2339px;top:758px;font-size:18px;line-height:30px;color:#4589f5">详情</div>
<div class="a" style="left:2387px;top:754px;width:1px;height:29px;background:#e4e7ed"></div>
<svg class="a" style="left:2408px;top:770px" width="20" height="6" viewBox="0 0 20 6"><circle cx="5" cy="3" r="2.2" fill="#4589f5"/><circle cx="10.5" cy="3" r="2.2" fill="#4589f5"/><circle cx="16" cy="3" r="2.2" fill="#4589f5"/></svg>
<div class="a" style="left:301px;top:803px;width:2229px;height:64px;background:#fafafa"></div>
<div class="hl" style="left:301px;top:803px;width:2229px"></div>
<div class="td" style="left:316px;top:825px;color:#4589f5">homeworkmodel51399999</div>
<div class="td" style="left:655px;top:822px">主数据全量同步</div>
<div class="td" style="left:987px;top:822px">model51399999</div>
<div class="td" style="left:1251px;top:822px;color:#e26a66">停用</div>
<div class="td" style="left:1515px;top:822px">已启用定时</div>
<div class="td" style="left:1779px;top:822px">2025-05-13 04:07:17</div>
<div class="td" style="left:2043px;top:822px">admin</div>
<div class="a" style="left:2304px;top:818px;line-height:0"><svg width="32" height="32" viewBox="0 0 32 32"><path d="M15.3 6.8 L21.3 10.4 L12.7 24.9 L7.3 26.4 L6.7 21.3 Z M13.6 10.2 L19.6 13.8 M6.7 21.3 L12.7 24.9" fill="none" stroke="#4589f5" stroke-width="1.6" stroke-linejoin="round"/><path d="M15.2 26.8 H25.3" stroke="#4589f5" stroke-width="2" stroke-linecap="round"/></svg></div>
<div class="a" style="left:2339px;top:822px;font-size:18px;line-height:30px;color:#4589f5">编辑</div>
<div class="a" style="left:2387px;top:818px;width:1px;height:29px;background:#e4e7ed"></div>
<svg class="a" style="left:2408px;top:834px" width="20" height="6" viewBox="0 0 20 6"><circle cx="5" cy="3" r="2.2" fill="#4589f5"/><circle cx="10.5" cy="3" r="2.2" fill="#4589f5"/><circle cx="16" cy="3" r="2.2" fill="#4589f5"/></svg>
<div class="hl" style="left:301px;top:867px;width:2229px"></div>
<div class="vl" style="left:639px;top:158px;height:709px"></div>
<div class="vl" style="left:971px;top:158px;height:709px"></div>
<div class="vl" style="left:1235px;top:158px;height:709px"></div>
<div class="vl" style="left:1499px;top:158px;height:709px"></div>
<div class="vl" style="left:1763px;top:158px;height:709px"></div>
<div class="vl" style="left:2027px;top:158px;height:709px"></div>
<div class="vl" style="left:2291px;top:158px;height:709px"></div>
<div class="hl" style="left:301px;top:1206px;width:2229px"></div>
<div class="a" style="left:1584px;top:1222px;font-size:21px;line-height:30px;color:#606266">共 71 条</div>
<div class="a" style="left:1680px;top:1216px;width:150px;height:42px;border:1px solid #dcdfe6;border-radius:4px"></div>
<div class="a" style="left:1709px;top:1223px;font-size:21px;line-height:30px;color:#222">10条/页</div>
<svg class="a" style="left:1803px;top:1232px" width="16" height="11" viewBox="0 0 16 11"><path d="M1.8 2 L8 8.6 L14.2 2" fill="none" stroke="#c0c4cc" stroke-width="1.4"/></svg>
<div class="a" style="left:1860px;top:1216px;width:45px;height:42px;border:1px solid #e4e7ed;border-radius:4px;background:#fff"></div>
<svg class="a" style="left:1874px;top:1229px" width="14" height="18" viewBox="0 0 14 18"><path d="M10.5 2 L3.5 8.8 L10.5 15.6" fill="none" stroke="#c8ccd4" stroke-width="1.6"/></svg>
<div class="pg" style="left:1920px;border-color:#4589f5;color:#4589f5;font-weight:bold">1</div>
<div class="pg" style="left:1969px">2</div>
<div class="pg" style="left:2019px">3</div>
<div class="pg" style="left:2068px">4</div>
<div class="pg" style="left:2118px">5</div>
<div class="pg" style="left:2167px">6</div>
<div class="pg" style="left:2217px"><svg width="20" height="6" viewBox="0 0 20 6" style="position:absolute;left:7px;top:19px"><circle cx="3" cy="3" r="2" fill="#555"/><circle cx="10" cy="3" r="2" fill="#555"/><circle cx="17" cy="3" r="2" fill="#555"/></svg></div>
<div class="pg" style="left:2266px">8</div>
<div class="a" style="left:2316px;top:1216px;width:45px;height:42px;border:1px solid #dcdcdc;border-radius:4px;background:#fff"></div>
<svg class="a" style="left:2331px;top:1229px" width="14" height="18" viewBox="0 0 14 18"><path d="M3.5 2 L10.5 8.8 L3.5 15.6" fill="none" stroke="#333" stroke-width="1.6"/></svg>
<div class="a" style="left:2367px;top:1223px;font-size:20px;line-height:30px;color:#606266">前往</div>
<div class="a" style="left:2413px;top:1216px;width:69px;height:42px;border:1px solid #dcdfe6;border-radius:4px;text-align:center;font-size:21px;line-height:40px;color:#222">1</div>
<div class="a" style="left:2487px;top:1224px;font-size:20px;line-height:30px;color:#606266">页</div>
<div class="a" style="left:2350px;top:286px;width:105px;height:81px;background:#fff;border-radius:4px;box-shadow:0 3px 16px rgba(0,0,0,0.13)"></div>
<svg class="a" style="left:2367px;top:300px" width="14" height="16" viewBox="0 0 14 16"><path d="M7 15 V2.5 M2.2 7.2 L7 2.4 L11.8 7.2" fill="none" stroke="#222" stroke-width="1.2"/></svg>
<div class="a" style="left:2404px;top:294px;font-size:18px;line-height:30px;color:#1f1f1f">上线</div>
<svg class="a" style="left:2365px;top:336px" width="18" height="18" viewBox="0 0 18 18"><path d="M2 4 H16 M6.5 4 V2.2 H11.5 V4 M4 4 V16.3 H14 V4 M7.5 7.5 V13 M10.5 7.5 V13" fill="none" stroke="#1f1f1f" stroke-width="1.3"/></svg>
<div class="a" style="left:2404px;top:331px;font-size:18px;line-height:30px;color:#1f1f1f">删除</div>
<div class="a" style="left:2346px;top:287px;width:122px;height:39px;border:4px solid #e8192b;border-radius:3px"></div>
</body></html>
